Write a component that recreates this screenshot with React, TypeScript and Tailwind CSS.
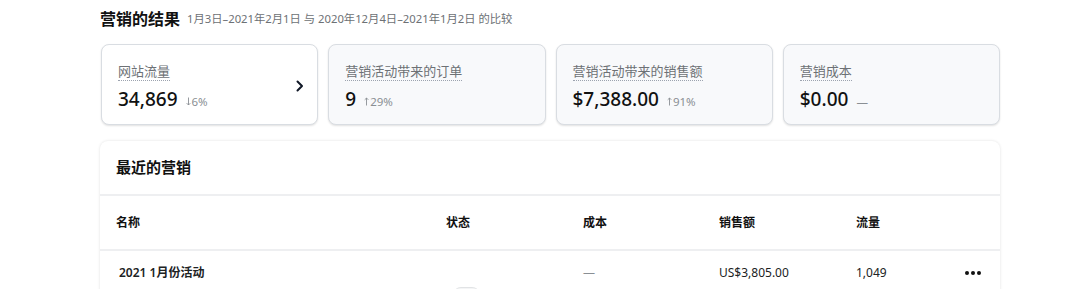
import React from "react";

const font = { fontFamily: '"Noto Sans", "Noto Sans CJK SC", sans-serif' };

function ChevronRight() {
  return (
    <svg width="12" height="14" viewBox="0 0 12 14" fill="none">
      <path d="M3.5 2.5L8 7l-4.5 4.5" stroke="#111827" strokeWidth="2" strokeLinecap="round" strokeLinejoin="round" />
    </svg>
  );
}

function Arrow({ dir }: { dir: "up" | "down" }) {
  return (
    <svg width="5" height="9" viewBox="0 0 5 9" fill="none" className="mr-[1px] inline-block">
      {dir === "up" ? (
        <path d="M2.5 8.5V1M0.7 2.8L2.5 1l1.8 1.8" stroke="#8a8f94" strokeWidth="0.9" />
      ) : (
        <path d="M2.5 0.5V8M0.7 6.2L2.5 8l1.8-1.8" stroke="#8a8f94" strokeWidth="0.9" />
      )}
    </svg>
  );
}

function Card({ label, value, change, dir, active }: { label: string; value: string; change: string; dir?: "up" | "down"; active?: boolean }) {
  return (
    <div
      className={`relative flex h-[81px] flex-1 flex-col rounded-lg border border-[#d9dde2] pl-[16px] pt-[17px] shadow-[0_1px_2px_rgba(0,0,0,0.12)] ${
        active ? "bg-white" : "bg-[#f8f9fb]"
      }`}
    >
      <div className="self-start border-b border-dotted border-[#9ca3af] text-[13px] leading-[18px] text-[#6d7175]">{label}</div>
      <div className="mt-[6px] flex items-baseline gap-[8px]">
        <span className="text-[19px] font-medium leading-[24px] text-[#111]">{value}</span>
        <span className="flex items-center text-[11.5px] text-[#8a8f94]">
          {dir && <Arrow dir={dir} />}
          {change}
        </span>
      </div>
      {active && (
        <div className="absolute right-[11px] top-[34px]">
          <ChevronRight />
        </div>
      )}
    </div>
  );
}

export default function App() {
  return (
    <div className="h-[289px] w-[1080px] overflow-hidden bg-white" style={font}>
      <div className="ml-[100px] w-[900px]">
        <div className="flex h-[37px] items-center gap-[7px] pt-[1px]">
          <span className="text-[16px] font-bold text-[#111]">营销的结果</span>
          <span className="text-[11.3px] text-[#6d7175]">1月3日–2021年2月1日 与 2020年12月4日–2021年1月2日 的比较</span>
        </div>
        <div className="mt-[7px] flex gap-[10px] pl-[1px]">
          <Card label="网站流量" value="34,869" change="6%" dir="down" active />
          <Card label="营销活动带来的订单" value="9" change="29%" dir="up" />
          <Card label="营销活动带来的销售额" value="$7,388.00" change="91%" dir="up" />
          <Card label="营销成本" value="$0.00" change="—" />
        </div>
        <div className="mt-[16px] h-[200px] rounded-lg bg-white shadow-[0_0_3px_rgba(0,0,0,0.12)]">
          <div className="flex h-[55px] items-center border-b-2 border-[#eeeff1] pl-[16px]">
            <span className="text-[15px] font-semibold text-[#111]">最近的营销</span>
          </div>
          <div className="flex h-[55px] items-center border-b-2 border-[#eeeff1] text-[12px] font-bold text-[#111]">
            <div className="w-[346px] pl-[16px]">名称</div>
            <div className="w-[137px]">状态</div>
            <div className="w-[136px]">成本</div>
            <div className="w-[137px]">销售额</div>
            <div className="flex-1">流量</div>
          </div>
          <div className="relative flex h-[44px] items-center text-[12px] text-[#202223]">
            <div className="w-[346px] pl-[19px] font-semibold">2021 1月份活动</div>
            <div className="w-[137px]"></div>
            <div className="w-[136px] text-[#8a8f94]">—</div>
            <div className="w-[137px]">US$3,805.00</div>
            <div className="w-[109px]">1,049</div>
            <div className="flex gap-[2px]">
              <span className="h-[4px] w-[4px] rounded-full bg-[#111]"></span>
              <span className="h-[4px] w-[4px] rounded-full bg-[#111]"></span>
              <span className="h-[4px] w-[4px] rounded-full bg-[#111]"></span>
            </div>
            <div className="absolute left-[353px] top-[36px] h-[20px] w-[27px] rounded-[8px] border-t border-[#e1e3e5] bg-[#f4f5f6]"></div>
          </div>
        </div>
      </div>
    </div>
  );
}
